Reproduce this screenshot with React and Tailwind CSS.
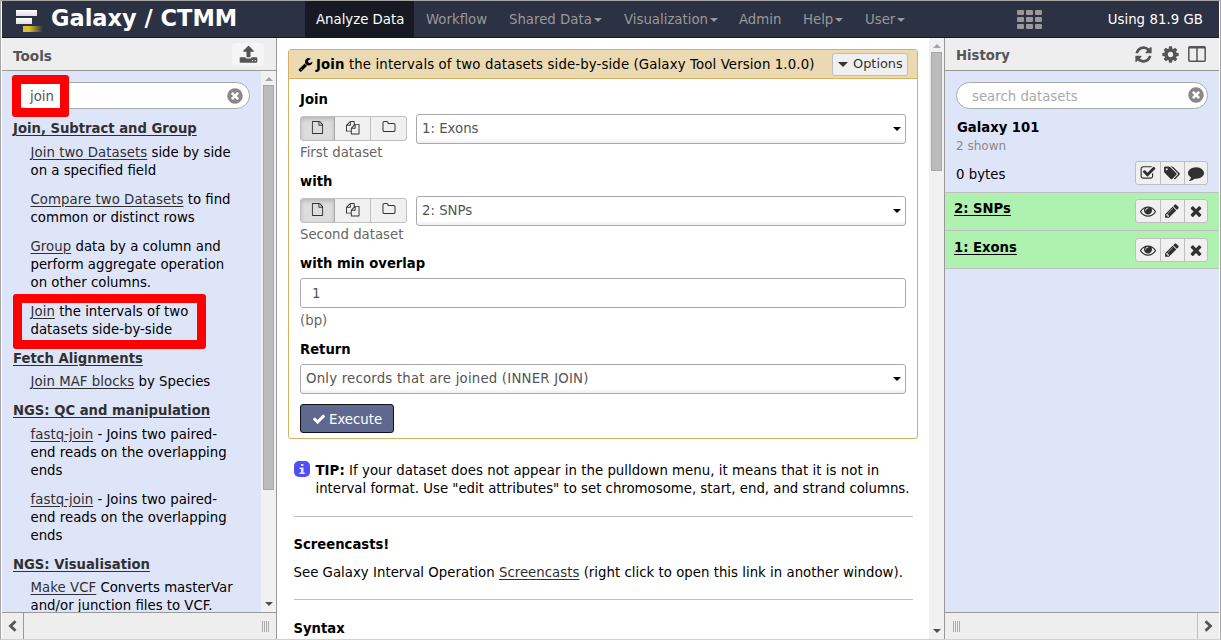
import React from 'react';

const P = {
  file: 'M1596 380q28 28 48 76t20 88v1152q0 40-28 68t-68 28h-1344q-40 0-68-28t-28-68v-1600q0-40 28-68t68-28h896q40 0 88 20t76 48zm-444-244v376h376q-10-29-22-41l-313-313q-12-12-41-22zm384 1528v-1024h-416q-40 0-68-28t-28-68v-416h-768v1536h1280z',
  files: 'M1696 384q40 0 68 28t28 68v1216q0 40-28 68t-68 28h-960q-40 0-68-28t-28-68v-288h-544q-40 0-68-28t-28-68v-672q0-40 20-88t48-76l408-408q28-28 76-48t88-20h416q40 0 68 28t28 68v328q68-40 128-40h416zm-544 213l-299 299h299v-299zm-640-384l-299 299h299v-299zm196 647l316-316v-416h-384v416q0 40-28 68t-68 28h-416v640h512v-256q0-40 20-88t48-76zm956 804v-1152h-384v416q0 40-28 68t-68 28h-416v640h896z',
  folder: 'M1600 1312v-704q0-40-28-68t-68-28h-704q-40 0-68-28t-28-68v-64q0-40-28-68t-68-28h-320q-40 0-68 28t-28 68v960q0 40 28 68t68 28h1216q40 0 68-28t28-68zm128-704v704q0 92-66 158t-158 66h-1216q-92 0-158-66t-66-158v-960q0-92 66-158t158-66h320q92 0 158 66t66 158v32h672q92 0 158 66t66 158z',
  eye: 'M1664 960q-152-236-381-353 61 104 61 225 0 185-131.5 316.5t-316.5 131.5-316.5-131.5-131.5-316.5q0-121 61-225-229 117-381 353 133 205 333.5 326.5t434.5 121.5 434.5-121.5 333.5-326.5zm-720-384q0-20-14-34t-34-14q-125 0-214.5 89.5t-89.5 214.5q0 20 14 34t34 14 34-14 14-34q0-86 61-147t147-61q20 0 34-14t14-34zm848 384q0 34-20 69-140 230-376.5 368.5t-499.5 138.5-499.5-139-376.5-368q-20-35-20-69t20-69q140-229 376.5-368t499.5-139 499.5 139 376.5 368q20 35 20 69z',
  pencil: 'M491 1536l91-91-235-235-91 91v107h128v128h107zm523-928q0-22-22-22-10 0-17 7l-542 542q-7 7-7 17 0 22 22 22 10 0 17-7l542-542q7-7 7-17zm-54-192l416 416-832 832h-416v-416zm683 96q0 53-37 90l-166 166-416-416 166-165q36-38 90-38 53 0 91 38l235 234q37 39 37 91z',
  times: 'M1490 1322q0 40-28 68l-136 136q-28 28-68 28t-68-28l-294-294-294 294q-28 28-68 28t-68-28l-136-136q-28-28-28-68t28-68l294-294-294-294q-28-28-28-68t28-68l136-136q28-28 68-28t68 28l294 294 294-294q28-28 68-28t68 28l136 136q28 28 28 68t-28 68l-294 294 294 294q28 28 28 68z',
  check: 'M1671 566q0 40-28 68l-724 724-136 136q-28 28-68 28t-68-28l-136-136-362-362q-28-28-28-68t28-68l136-136q28-28 68-28t68 28l294 295 656-657q28-28 68-28t68 28l136 136q28 28 28 68z',
  refresh: 'M1639 1056q0 5-1 7-64 268-268 434.5t-478 166.5q-146 0-282.5-55t-243.5-157l-129 129q-19 19-45 19t-45-19-19-45v-448q0-26 19-45t45-19h448q26 0 45 19t19 45-19 45l-137 137q71 66 161 102t187 36q134 0 250-65t186-179q11-17 53-117 8-23 30-23h192q13 0 22.5 9.5t9.5 22.5zm25-800v448q0 26-19 45t-45 19h-448q-26 0-45-19t-19-45 19-45l138-138q-148-137-349-137-134 0-250 65t-186 179q-11 17-53 117-8 23-30 23h-199q-13 0-22.5-9.5t-9.5-22.5v-7q65-268 270-434.5t480-166.5q146 0 284 55.5t245 156.5l130-129q19-19 45-19t45 19 19 45z',
  cog: 'M1152 896q0-106-75-181t-181-75-181 75-75 181 75 181 181 75 181-75 75-181zm512-109v222q0 12-8 23t-20 13l-185 28q-19 54-39 91 35 50 107 138 10 12 10 25t-9 23q-27 37-99 108t-94 71q-12 0-26-9l-138-108q-44 23-91 38-16 136-29 186-7 28-36 28h-222q-14 0-24.5-8.5t-11.5-21.5l-28-184q-49-16-90-37l-141 107q-10 9-25 9-14 0-25-11-126-114-165-168-7-10-7-23 0-12 8-23 15-21 51-66.5t54-70.5q-27-50-41-99l-183-27q-13-2-21-12.5t-8-23.5v-222q0-12 8-23t19-13l186-28q14-46 39-92-40-57-107-138-10-12-10-24 0-10 9-23 26-36 98.5-107.5t94.5-71.5q13 0 26 10l138 107q44-23 91-38 16-136 29-186 7-28 36-28h222q14 0 24.5 8.5t11.5 21.5l28 184q49 16 90 37l142-107q9-9 24-9 13 0 25 10 129 119 165 170 7 8 7 22 0 12-8 23-15 21-51 66.5t-54 70.5q26 50 41 98l183 28q13 2 21 12.5t8 23.5z',
  clear: 'M1277 1122q0-26-19-45l-181-181 181-181q19-19 19-45 0-27-19-46l-90-90q-19-19-46-19-26 0-45 19l-181 181-181-181q-19-19-45-19-27 0-46 19l-90 90q-19 19-19 46 0 26 19 45l181 181-181 181q-19 19-19 45 0 27 19 46l90 90q19 19 46 19 26 0 45-19l181-181 181 181q19 19 45 19 27 0 46-19l90-90q19-19 19-46zm387-226q0 209-103 385.5t-279.5 279.5-385.5 103-385.5-103-279.5-279.5-103-385.5 103-385.5 279.5-279.5 385.5-103 385.5 103 279.5 279.5 103 385.5z',
  upload: 'M1344 1472q0-26-19-45t-45-19-45 19-19 45 19 45 45 19 45-19 19-45zm256 0q0-26-19-45t-45-19-45 19-19 45 19 45 45 19 45-19 19-45zm128-224v320q0 40-28 68t-68 28h-1472q-40 0-68-28t-28-68v-320q0-40 28-68t68-28h427q21 56 70.5 92t110.5 36h256q61 0 110.5-36t70.5-92h427q40 0 68 28t28 68zm-325-648q-17 40-59 40h-256v448q0 26-19 45t-45 19h-256q-26 0-45-19t-19-45v-448h-256q-42 0-59-40-17-39 14-69l448-448q18-19 45-19t45 19l448 448q31 30 14 69z',
  wrench: 'M448 1472q0-26-19-45t-45-19-45 19-19 45 19 45 45 19 45-19 19-45zm644-420l-682 682q-37 37-90 37-52 0-91-37l-106-108q-38-36-38-90 0-53 38-91l681-681q39 98 114.5 173.5t173.5 114.5zm634-435q0 39-23 106-47 134-164.5 217.5t-258.5 83.5q-185 0-316.5-131.5t-131.5-316.5 131.5-316.5 316.5-131.5q58 0 121.5 16.5t107.5 46.5q16 11 16 28t-16 28l-293 169v224l193 107q5-3 79-48.5t135.5-81 70.5-35.5q15 0 23.5 10t8.5 25z',
  checkSquare: 'M1472 930v318q0 119-84.5 203.5t-203.5 84.5h-832q-119 0-203.5-84.5t-84.5-203.5v-832q0-119 84.5-203.5t203.5-84.5h832q63 0 117 25 15 7 18 23 3 17-9 29l-49 49q-10 10-23 10-3 0-9-2-23-6-45-6h-832q-66 0-113 47t-47 113v832q0 66 47 113t113 47h832q66 0 113-47t47-113v-254q0-13 9-22l64-64q10-10 23-10 6 0 12 3 20 8 20 29zm231-489l-814 814q-24 24-57 24t-57-24l-430-430q-24-24-24-57t24-57l110-110q24-24 57-24t57 24l263 263 647-647q24-24 57-24t57 24l110 110q24 24 24 57t-24 57z',
  tags: 'M448 448q0-53-37.5-90.5t-90.5-37.5-90.5 37.5-37.5 90.5 37.5 90.5 90.5 37.5 90.5-37.5 37.5-90.5zm1067 576q0 53-37 90l-491 492q-39 37-91 37-53 0-90-37l-715-716q-38-37-64.5-101t-26.5-117v-416q0-52 38-90t90-38h416q53 0 117 26.5t102 64.5l715 714q37 39 37 91zm384 0q0 53-37 90l-491 492q-39 37-91 37-36 0-59-14t-53-45l470-470q37-37 37-90 0-52-37-91l-715-714q-38-38-102-64.5t-117-26.5h224q53 0 117 26.5t102 64.5l715 714q37 39 37 91z',
  comment: 'M1792 896q0 174-120 321.5t-326 233-450 85.5q-70 0-145-8-198 175-460 242-49 14-114 22-17 2-30.5-9t-17.5-29v-1q-3-4-.5-12t2-10 4.5-9.5l6-9 7-8.5 8-9q7-8 31-34.5t34.5-38 31-39.5 32.5-51 27-59 26-76q-157-89-247.5-220t-90.5-281q0-130 71-248.5t191-204.5 286-136.5 348-50.5q244 0 450 85.5t326 233 120 321.5z',
};

function Icon({ name, className = 'size-[14px]', box = '0 0 1792 1792' }) {
  return (
    <svg viewBox={box} fill="currentColor" className={`block shrink-0 overflow-visible ${className}`}>
      <path d={P[name]} />
    </svg>
  );
}

function Caret({ className = '' }) {
  return (
    <svg viewBox="0 0 8 4" className={`block h-1 w-2 shrink-0 ${className}`} fill="currentColor">
      <path d="M0 0h8L4 4z" />
    </svg>
  );
}

function NavItem({ label, menu, active, width }) {
  return (
    <div className={`flex shrink-0 items-center pl-[11px] pt-[2px] ${width} ${active ? 'bg-[#171a22] text-white' : 'text-[#999999]'}`}>
      <span>{label}</span>
      {menu && <Caret className="ml-[2px]" />}
    </div>
  );
}

function Scrollbar({ thumb, width }) {
  return (
    <div className={`flex shrink-0 flex-col items-center bg-[#f1f1f1] ${width}`}>
      <Caret className="mt-[6px] rotate-180 text-[#a3a3a3]" />
      <div className={`w-[11px] border border-[#a8a8a8] bg-[#bcbcbc] ${thumb}`} />
      <Caret className="mb-[6px] mt-auto text-[#505050]" />
    </div>
  );
}

function SectionTitle({ children, className = '' }) {
  return <div className={`h-[18px] pt-px text-[13.2px] font-bold text-[#303030] underline underline-offset-2 ${className}`}>{children}</div>;
}

function Tool({ link, lines, className = '' }) {
  return (
    <div className={`pl-[17.5px] ${className}`}>
      {lines.map((line, i) => (
        <div key={i} className="h-[18px] whitespace-nowrap pt-px">
          {i === 0 && <a className="tracking-[0.05px] text-[#303030] underline underline-offset-2">{link}</a>}
          {i === 0 && ' '}
          {line}
        </div>
      ))}
    </div>
  );
}

function Label({ children, className = '' }) {
  return <div className={`h-[18px] pt-px text-[13.2px] font-bold text-black ${className}`}>{children}</div>;
}

function Select({ children, className = '' }) {
  return (
    <div className={`flex h-[30px] items-center justify-between rounded-[3px] border border-[#aaaaaa] bg-gradient-to-t from-[#eeeeee] to-white to-15% pl-[5px] pr-1 text-[#555555] ${className}`}>
      <span>{children}</span>
      <Caret className="text-black" />
    </div>
  );
}

function SourceButtons() {
  return (
    <div className="mt-0.5 flex h-[25px] w-[107px] shrink-0 overflow-hidden rounded-[3px] border border-[#bfbfbf] bg-[#f0f0f0] text-[#333333]">
      <div className="flex w-[34px] justify-center border-r border-[#a8a8a8] bg-[#dddddd] pt-1 shadow-[inset_0_2px_4px_rgba(0,0,0,0.18)]">
        <Icon name="file" className="h-[13px] w-[13px]" />
      </div>
      <div className="flex w-[36px] justify-center border-r border-[#bfbfbf] pt-1">
        <Icon name="files" className="size-[13.5px]" />
      </div>
      <div className="flex w-[35px] justify-center pt-[3px]">
        <Icon name="folder" className="size-[14px]" />
      </div>
    </div>
  );
}

function DatasetField({ label, value, help, className = '' }) {
  return (
    <div className={className}>
      <Label>{label}</Label>
      <div className="mt-[6px] flex gap-[9px]">
        <SourceButtons />
        <Select className="w-[490px]">{value}</Select>
      </div>
      <div className="h-[18px] text-[#666666]">{help}</div>
    </div>
  );
}

function IconGroup({ icons, className = '' }) {
  return (
    <div className={`flex h-6 w-[73px] rounded-[3px] border border-[#bfbfbf] bg-[#f0f0f0] text-[#303030] ${className}`}>
      {icons.map((n, i) => (
        <div key={n} className={`flex items-center justify-center ${i === 0 ? 'w-[25px]' : 'w-6 border-l border-[#bfbfbf]'}`}>
          <Icon name={n} className="size-4" box={n === 'tags' ? '0 0 1920 1792' : '0 0 1792 1792'} />
        </div>
      ))}
    </div>
  );
}

function Dataset({ children, className = '' }) {
  return (
    <div className={`flex h-[38px] justify-between border-b border-[#bfbfbf] bg-[#aff1af] pl-[9px] pr-[11px] ${className}`}>
      <span className="mt-px text-[13.2px] font-bold leading-[18px] text-black underline underline-offset-2">{children}</span>
      <IconGroup icons={['eye', 'pencil', 'times']} />
    </div>
  );
}

function Grip() {
  return (
    <div className="flex gap-px">
      <i className="h-[11px] w-px bg-[#aaaaaa]" />
      <i className="h-[11px] w-px bg-[#aaaaaa]" />
      <i className="h-[11px] w-px bg-[#aaaaaa]" />
      <i className="h-[11px] w-px bg-[#aaaaaa]" />
    </div>
  );
}

function Header() {
  return (
    <header className="flex h-[37px] shrink-0 border-b border-[#15171f] bg-[#2c3143] leading-[18px]">
      <div className="flex w-[303px] shrink-0 pl-[14px]">
        <svg viewBox="0 0 28 24" className="mt-[7px] block h-6 w-7 shrink-0">
          <defs>
            <linearGradient id="bar"><stop offset="0.3" stopColor="#d8c02b" /><stop offset="1" stopColor="#d8c02b" stopOpacity="0" /></linearGradient>
            <linearGradient id="pale" x1="0" x2="0" y1="0" y2="1"><stop stopColor="#fff" /><stop offset="1" stopColor="#ddd" /></linearGradient>
          </defs>
          <rect width="21" height="6" y="2" fill="url(#pale)" />
          <rect width="16" height="6" y="10" fill="url(#pale)" />
          <rect x="7" y="18" width="20" height="6" fill="url(#bar)" />
        </svg>
        <span className="ml-[7px] mt-[3px] whitespace-nowrap text-[22.5px] font-bold leading-[28px] text-white">Galaxy / CTMM</span>
      </div>
      <NavItem label="Analyze Data" width="w-[109px]" active />
      <NavItem label="Workflow" width="ml-px w-[83px]" />
      <NavItem label="Shared Data" width="w-[115px]" menu />
      <NavItem label="Visualization" width="w-[115px]" menu />
      <NavItem label="Admin" width="w-[64px]" />
      <NavItem label="Help" width="w-[62px]" menu />
      <NavItem label="User" width="w-[62px]" menu />
      <div className="ml-auto mt-[9px] grid h-[19px] w-[25px] grid-cols-3 gap-[2px]">
        {[0, 1, 2, 3, 4, 5, 6, 7, 8].map((i) => <i key={i} className="rounded-[1px] bg-[#999999]" />)}
      </div>
      <div className="ml-[66px] mr-4 flex items-center whitespace-nowrap pt-[2px] tracking-[0.05px] text-white">Using 81.9 GB</div>
    </header>
  );
}

function ToolsPanel() {
  return (
    <aside className="flex w-[275px] shrink-0 flex-col border-r border-[#999999] bg-[#dfe5f9]">
      <div className="flex h-[33px] items-center justify-between border-b border-[#999999] bg-[#eeeeee] pl-[11px] pr-3">
        <span className="mt-1 text-[13.6px] font-bold text-[#555555]">Tools</span>
        <div className="flex h-[23px] w-8 items-center justify-center rounded-[3px] bg-[#f5f5f5] text-[#555555]">
          <Icon name="upload" className="size-[19px]" />
        </div>
      </div>
      <div className="flex h-[541px] overflow-hidden">
        <div className="relative w-[259px] shrink-0 pl-[11px]">
          <div className="mt-[11px] flex h-[27px] w-[237px] items-center justify-between rounded-[14px] border border-[#aaaaaa] bg-white pl-4 pr-[5px]">
            <span className="mt-[2px] text-[#555555]">join</span>
            <Icon name="clear" className="size-[18px] text-[#888888]" />
          </div>
          <SectionTitle className="mt-[10px]">Join, Subtract and Group</SectionTitle>
          <Tool className="mt-[6px]" link="Join two Datasets" lines={['side by side', 'on a specified field']} />
          <Tool className="mt-[11px]" link="Compare two Datasets" lines={['to find', 'common or distinct rows']} />
          <Tool className="mt-[11px]" link="Group" lines={['data by a column and', 'perform aggregate operation', 'on other columns.']} />
          <Tool className="mt-[11px]" link="Join" lines={['the intervals of two', 'datasets side-by-side']} />
          <SectionTitle className="mt-[11px]">Fetch Alignments</SectionTitle>
          <Tool className="mt-[5px]" link="Join MAF blocks" lines={['by Species']} />
          <SectionTitle className="mt-[11px]">NGS: QC and manipulation</SectionTitle>
          <Tool className="mt-[6px]" link="fastq-join" lines={['- Joins two paired-', 'end reads on the overlapping', 'ends']} />
          <Tool className="mt-[11px]" link="fastq-join" lines={['- Joins two paired-', 'end reads on the overlapping', 'ends']} />
          <SectionTitle className="mt-[11px]">NGS: Visualisation</SectionTitle>
          <Tool className="mt-[5px]" link="Make VCF" lines={['Converts masterVar', 'and/or junction files to VCF.']} />
          <div className="absolute left-[10px] top-[4px] h-[42px] w-[57px] rounded-[3px] border-[9px] border-[#ff0000]" />
          <div className="absolute left-[11px] top-[223px] h-[55px] w-[193px] rounded-[3px] border-[9px] border-[#ff0000]" />
        </div>
        <Scrollbar width="w-[15px]" thumb="mt-1 h-[405px]" />
      </div>
      <div className="flex h-[27px] items-center justify-between border-t border-[#999999] bg-[#eeeeee] pr-[7px]">
        <div className="flex h-full w-[22px] items-center justify-center border-r border-[#999999]">
          <svg viewBox="0 0 9 12" className="block h-3 w-[9px]" fill="none" stroke="#555555" strokeWidth="2.8"><path d="M7.5 1.2L2.5 6l5 4.8" /></svg>
        </div>
        <Grip />
      </div>
    </aside>
  );
}

function Center() {
  return (
    <main className="flex h-[601px] w-[668px] shrink-0 overflow-hidden border-r border-[#999999] bg-white">
      <div className="w-[652px] shrink-0 pl-[11px] pt-[11px]">
        <section className="h-[390px] w-[630px] rounded-[3px] border border-[#d6b161]">
          <div className="flex h-[29px] items-center border-b border-[#d6b161] bg-[#ebd9b2] pl-[9px] pr-[9px] text-black">
            <Icon name="wrench" className="size-[15px]" />
            <span className="ml-[3px] mt-[2px] whitespace-nowrap tracking-[0.125px]"><b>Join</b> the intervals of two datasets side-by-side (Galaxy Tool Version 1.0.0)</span>
            <div className="ml-auto flex h-[23px] w-[76px] items-center rounded-[3px] border border-[#bfbfbf] bg-[#f0f0f0] pl-[5px] text-[#333333]">
              <svg viewBox="0 0 10 5" className="mr-[5px] block h-[5px] w-[10px]" fill="currentColor"><path d="M0 0h10L5 5z" /></svg>
              <span className="text-[12.9px]">Options</span>
            </div>
          </div>
          <div className="pl-[11px] pt-[11px]">
            <DatasetField label="Join" value="1: Exons" help="First dataset" />
            <DatasetField label="with" value="2: SNPs" help="Second dataset" className="mt-[10px]" />
            <Label className="mt-[10px]">with min overlap</Label>
            <div className="mt-[6px] flex h-[30px] w-[606px] items-center rounded-[3px] border border-[#aaaaaa] pl-[11px] pt-px text-[#555555]">1</div>
            <div className="mt-[4px] h-[18px] text-[#666666]">(bp)</div>
            <Label className="mt-[10px]">Return</Label>
            <Select className="mt-[6px] w-[606px]"><span className="tracking-[0.2px]">Only records that are joined (INNER JOIN)</span></Select>
            <div className="mt-[10px] flex h-[29px] w-[94px] items-center rounded-[3px] border border-[#111318] bg-[#5f6990] pl-[11px] text-white">
              <Icon name="check" className="mr-[3px] mt-px size-[14px]" />
              <span className="mt-[2px]">Execute</span>
            </div>
          </div>
        </section>
        <div className="ml-[6px] mt-[22px] flex text-black">
          <div className="flex size-4 items-center justify-center rounded-[5px] bg-[#4f4ff5]">
            <svg viewBox="0 0 8 10" className="block h-[10px] w-2" fill="#e4e4ff"><path d="M3 0h2.4v2H3zM1.5 3.4h4v5h1.2V10H1.4V8.4H3V5H1.5z" /></svg>
          </div>
          <div className="ml-[5.5px] whitespace-nowrap pt-px">
            <div className="h-[18px] tracking-[0.04px]"><b>TIP:</b> If your dataset does not appear in the pulldown menu, it means that it is not in</div>
            <div className="h-[17px]">interval format. Use "edit attributes" to set chromosome, start, end, and strand columns.</div>
          </div>
        </div>
        <hr className="ml-[6px] mt-[19px] w-[619px] border-[#bfbfbf]" />
        <Label className="ml-[5.5px] mt-[18px]">Screencasts!</Label>
        <div className="ml-[5.5px] mt-[10px] h-[18px] whitespace-nowrap pt-px tracking-[0.02px] text-black">
          See Galaxy Interval Operation <a className="text-[#303030] underline underline-offset-2">Screencasts</a> (right click to open this link in another window).
        </div>
        <hr className="ml-[6px] mt-[18px] w-[619px] border-[#bfbfbf]" />
        <Label className="ml-[5.5px] mt-[19px]">Syntax</Label>
      </div>
      <Scrollbar width="w-[15px]" thumb="mt-1 h-[119px]" />
    </main>
  );
}

function HistoryPanel() {
  return (
    <aside className="flex w-[274px] shrink-0 flex-col bg-[#dfe5f9]">
      <div className="flex h-[33px] items-center border-b border-[#999999] bg-[#eeeeee] pl-[11px] pr-[13px] text-[#555555]">
        <span className="mr-auto mt-1 text-[13.2px] font-bold">History</span>
        <Icon name="refresh" className="size-[19px]" />
        <Icon name="cog" className="ml-2 size-[19px]" />
        <svg viewBox="0 0 18 16" className="ml-2 block h-4 w-[18px]" fill="none" stroke="currentColor" strokeWidth="1.5"><rect x="0.8" y="0.8" width="16.4" height="14.4" rx="1" /><path d="M9 1v14" /><path d="M1 1.5h16" strokeWidth="2" /></svg>
      </div>
      <div className="ml-[11px] mt-[11px] flex h-[27px] w-[252px] items-center justify-between rounded-[14px] border border-[#aaaaaa] bg-white pl-[15px] pr-[2px]">
        <span className="mt-[2px] text-[#aaaaaa]">search datasets</span>
        <Icon name="clear" className="mb-[2px] size-[18px] text-[#888888]" />
      </div>
      <Label className="ml-3 mt-[9px]">Galaxy 101</Label>
      <div className="ml-[11px] h-[18px] pt-px text-[12px] text-[#888888]">2 shown</div>
      <div className="flex h-[39px] justify-between border-b border-[#bfbfbf] pl-[11px] pr-[11px] text-black">
        <span className="mt-[12px]">0 bytes</span>
        <IconGroup icons={['checkSquare', 'tags', 'comment']} className="mt-[7px]" />
      </div>
      <Dataset className="pt-[6px]">2: SNPs</Dataset>
      <Dataset className="pt-[7px]">1: Exons</Dataset>
      <div className="mt-auto flex h-[27px] items-center justify-between border-t border-[#999999] bg-[#eeeeee] pl-[8px]">
        <Grip />
        <div className="flex h-full w-[22px] items-center justify-center border-l border-[#bfbfbf]">
          <svg viewBox="0 0 9 12" className="block h-3 w-[9px]" fill="none" stroke="#555555" strokeWidth="2.8"><path d="M1.5 1.2L6.5 6l-5 4.8" /></svg>
        </div>
      </div>
    </aside>
  );
}

export default function App() {
  return (
    <div className="flex h-[640px] w-[1221px] flex-col overflow-hidden border border-b-[#d0d0d0] border-l-[#a6a6a6] border-r-[#a6a6a6] border-t-[#a6a6a6] bg-white px-px font-['DejaVu_Sans','Verdana',sans-serif] text-[13.3px] leading-[18px] text-black">
      <Header />
      <div className="flex h-[601px] shrink-0">
        <ToolsPanel />
        <Center />
        <HistoryPanel />
      </div>
    </div>
  );
}
